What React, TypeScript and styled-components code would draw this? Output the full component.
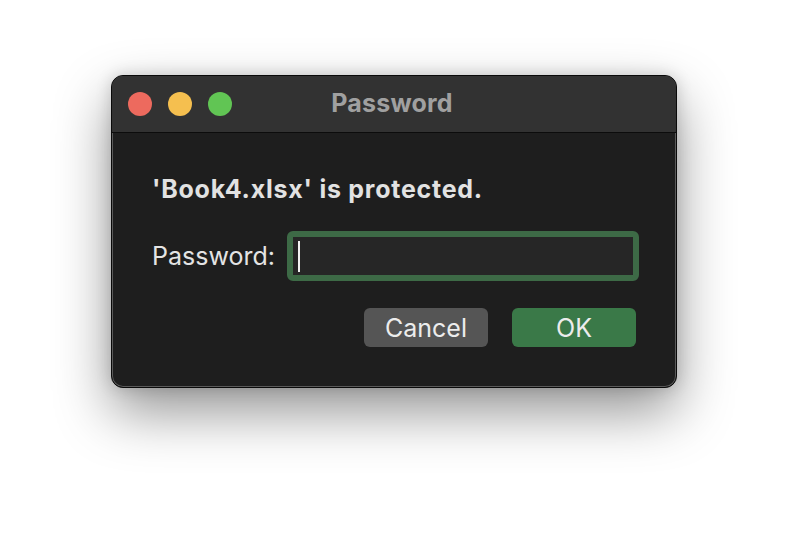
import React from 'react';
import styled, {createGlobalStyle} from 'styled-components';

const GlobalStyle = createGlobalStyle`
  html, body {
    margin: 0;
    padding: 0;
    background: #ffffff;
    font-family: Inter, "Liberation Sans", sans-serif;
  }
`

const Page = styled.div`
  width: 788px;
  height: 536px;
  display: flex;
  justify-content: center;
  padding-top: 75px;
  box-sizing: border-box;
`

const Window = styled.div`
  width: 566px;
  height: 313px;
  box-sizing: border-box;
  border-radius: 12px;
  background: #1e1e1e;
  border: 1px solid #0a0a0a;
  box-shadow: inset 0 0 0 1px #5a5a5a, 0 24px 55px rgba(0, 0, 0, 0.42), 0 0 16px rgba(0, 0, 0, 0.16);
  overflow: hidden;
  display: flex;
  flex-direction: column;
`

const TitleBar = styled.div`
  position: relative;
  height: 56px;
  flex: none;
  background: #323232;
  border-bottom: 1px solid #0c0c0c;
  display: flex;
  align-items: center;
  justify-content: center;
`

const Lights = styled.div`
  position: absolute;
  left: 16px;
  top: 16px;
  display: flex;
  gap: 16px;
`

const Light = styled.span<{ $color: string }>`
  width: 24px;
  height: 24px;
  border-radius: 50%;
  background: ${p => p.$color};
`

const Title = styled.div`
  font-size: 25px;
  font-weight: 700;
  color: #a0a0a0;
  margin-top: -3px;
  margin-left: -4px;
  letter-spacing: 0.2px;
`

const Body = styled.div`
  flex: 1;
  padding: 43px 37px 0 40px;
  display: flex;
  flex-direction: column;
`

const Message = styled.div`
  font-size: 25px;
  font-weight: 700;
  color: #e2e2e2;
  line-height: 26px;
  letter-spacing: 0.75px;
`

const FieldRow = styled.div`
  margin-top: 29px;
  display: flex;
  align-items: center;
  gap: 12px;
`

const Label = styled.div`
  font-size: 25px;
  color: #e4e4e4;
`

const Input = styled.div`
  width: 352px;
  height: 50px;
  box-sizing: border-box;
  border: 6px solid #3d6a46;
  border-radius: 6px;
  background: #262626;
  display: flex;
  align-items: center;
  padding-left: 5px;
`

const Caret = styled.span`
  width: 2px;
  height: 31px;
  background: #f2f2f2;
`

const Buttons = styled.div`
  margin-top: 27px;
  display: flex;
  justify-content: flex-end;
  gap: 24px;
  padding-right: 3px;
`

const Button = styled.div<{ $primary?: boolean }>`
  width: 124px;
  height: 39px;
  border-radius: 6px;
  background: ${p => (p.$primary ? '#3a7948' : '#555555')};
  color: #ececec;
  font-size: 25px;
  display: flex;
  align-items: center;
  justify-content: center;
`

const App = (): JSX.Element => {
    return (
        <Page>
            <GlobalStyle />
            <Window>
                <TitleBar>
                    <Lights>
                        <Light $color="#ed6a5e" />
                        <Light $color="#f5bf4f" />
                        <Light $color="#61c554" />
                    </Lights>
                    <Title>Password</Title>
                </TitleBar>
                <Body>
                    <Message>'Book4.xlsx' is protected.</Message>
                    <FieldRow>
                        <Label>Password:</Label>
                        <Input>
                            <Caret />
                        </Input>
                    </FieldRow>
                    <Buttons>
                        <Button>Cancel</Button>
                        <Button $primary>OK</Button>
                    </Buttons>
                </Body>
            </Window>
        </Page>
    )
}

export default App;
